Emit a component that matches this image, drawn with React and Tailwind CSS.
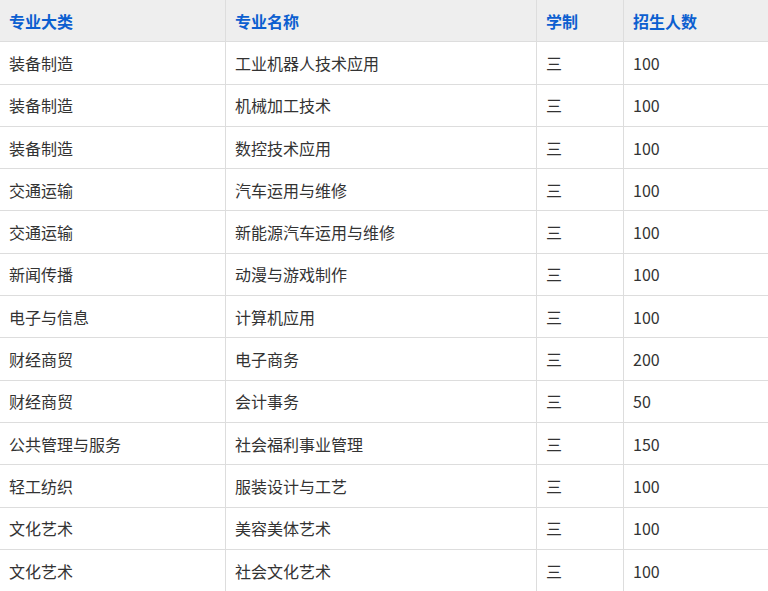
const rows=[["装备制造","工业机器人技术应用","100"],["装备制造","机械加工技术","100"],["装备制造","数控技术应用","100"],["交通运输","汽车运用与维修","100"],["交通运输","新能源汽车运用与维修","100"],["新闻传播","动漫与游戏制作","100"],["电子与信息","计算机应用","100"],["财经商贸","电子商务","200"],["财经商贸","会计事务","50"],["公共管理与服务","社会福利事业管理","150"],["轻工纺织","服装设计与工艺","100"],["文化艺术","美容美体艺术","100"],["文化艺术","社会文化艺术","100"]];
export default function App(){
const cell="h-[42.3px] flex items-center pl-[9px] border-b border-r border-[#dddddd]";
return <div className="w-[768px] h-[591px] overflow-hidden bg-white text-[16px]" style={{fontFamily:'"Microsoft YaHei","Noto Sans CJK SC",sans-serif'}}>
<div className="grid grid-cols-[226px_311px_87px_1fr]">
{["专业大类","专业名称","学制","招生人数"].map((h,i)=><div key={h} className={cell+" bg-[#eeeeee] font-bold text-[#0c5fd0] "+(i===3?"border-r-0":"")}>{h}</div>)}
{rows.map((r,j)=>[r[0],r[1],"三",r[2]].map((t,i)=><div key={j+"-"+i} className={cell+" text-[#333333] "+(i===3?"border-r-0":"")}>{t}</div>))}
</div></div>}
